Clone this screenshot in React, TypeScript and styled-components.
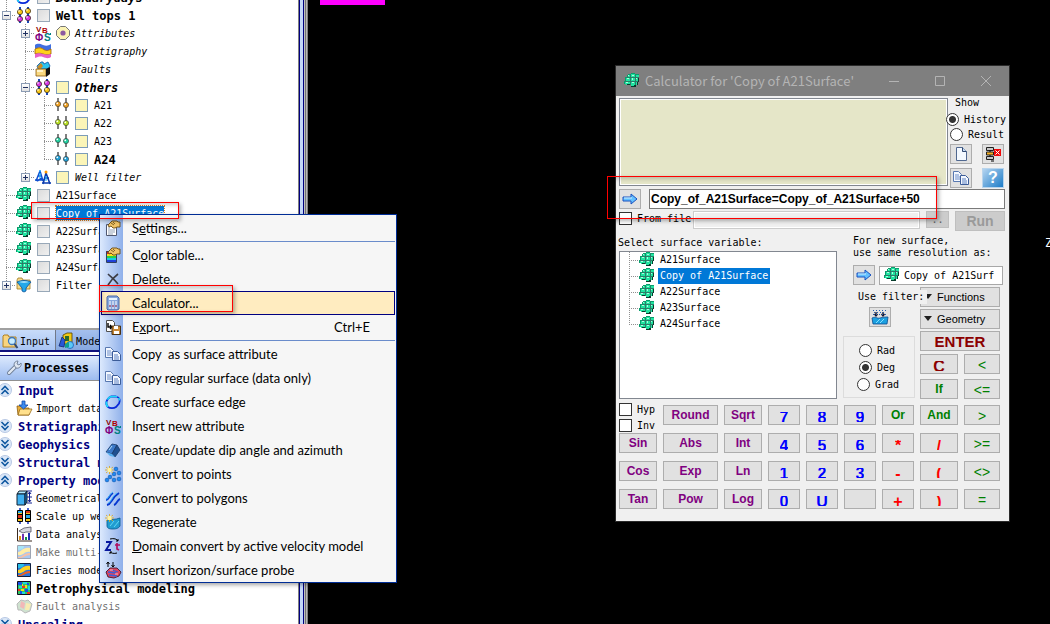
import React from 'react';
import styled, { createGlobalStyle, css } from 'styled-components';

const mono = '"DejaVu Sans Mono", "Liberation Mono", monospace';
const ui = 'Lato, "Noto Sans", sans-serif';
const titleFont = '"Noto Sans CJK SC", "Noto Sans", sans-serif';
const sans = '"Liberation Sans", Arial, sans-serif';

const Global = createGlobalStyle`
  * { box-sizing: border-box; }
  body { margin: 0; background: #000; font-family: ${mono}; font-size: 10px; color: #000; }
  button, input { font: inherit; color: inherit; margin: 0; padding: 0; }
  ul { list-style: none; margin: 0; padding: 0; }
`;

/* ---------- icons ---------- */

const Svg = styled.svg`
  display: block;
  flex: none;
  width: 16px;
  height: 16px;
  overflow: visible;
`;

const Ico = ({ children, faded }: { children: React.ReactNode; faded?: boolean }) => (
  <Svg viewBox="0 0 16 16" aria-hidden="true" opacity={faded ? 0.4 : 1}>{children}</Svg>
);

const SurfaceIcon = () => (
  <Ico>
    <g shapeRendering="crispEdges">
      <path d="M4 1h3V0h4v1h4v8h-1v3h-2v1h-1v1H7v-2H2v-1H0V8h1V4h2V2h1z" fill="#20e4a0" />
      <path d="M4 1h3V0h4v1h4v1h-4V1H7v1H4zM1 4h2V2h1v3H1zM0 8h1V5h1v4H1v2H0z" fill="#0a9c6c" />
      <path d="M6 2h1v10H6zM11 2h1v11h-1zM3 4h12v1H3zM1 8h14v1H1z" fill="#2c7c68" />
      <path d="M3 5h2v1H3zM4 2h1v1H4zM8 2h2v1H8zM8 5h1v2H8zM2 9h2v1H2zM8 9h2v1H8zM12 5h1v1h-1z" fill="#a8ffe0" />
      <path d="M14 5h1v4h-1zM13 9h1v3h-1zM10 12h2v2h-2zM7 13h4v1H7zM3 11h3v1H3z" fill="#083c2c" />
    </g>
  </Ico>
);

const BeadPair = ({ top, bottom }: { top: string; bottom: string }) => (
  <Ico>
    <path d="M4 0v16M12 0v16" stroke="#2060ff" strokeWidth="2" />
    <path d="M4 0v2M12 0v2M4 7v2M12 7v2M4 14v2M12 14v2" stroke="#103070" strokeWidth="1" />
    {[4, 12].map((x) => (
      <g key={x} stroke="#30200c" strokeWidth="0.7">
        <circle cx={x} cy={x === 4 ? 5 : 4} r="2.6" fill={top} />
        <circle cx={x} cy={x === 4 ? 12 : 11} r="2.6" fill={bottom} />
        <circle cx={x - 1} cy={x === 4 ? 4 : 3} r="0.8" fill="#fff" stroke="none" />
        <circle cx={x - 1} cy={x === 4 ? 11 : 10} r="0.8" fill="#fff" stroke="none" />
      </g>
    ))}
  </Ico>
);

const PinIcon = ({ color }: { color: string }) => (
  <Ico>
    <path d="M4 1v13M12 1v13" stroke="#606060" strokeWidth="1.6" />
    <circle cx="4" cy="7" r="2.6" fill={color} stroke="#303030" strokeWidth="0.6" />
    <circle cx="12" cy="8" r="2.6" fill={color} stroke="#303030" strokeWidth="0.6" />
    <circle cx="3.3" cy="6.3" r="0.9" fill="#fff" />
    <circle cx="11.3" cy="7.3" r="0.9" fill="#fff" />
  </Ico>
);

const AttrIcon = () => (
  <Ico>
    <g fontFamily="Liberation Sans" fontWeight="bold">
      <text x="1" y="7" fontSize="8" fill="#8b0000">V</text>
      <text x="7" y="8" fontSize="8" fill="#b00000">B</text>
      <text x="0" y="16" fontSize="10" fill="#800080">Φ</text>
      <text x="9" y="16" fontSize="10" fill="#008080">S</text>
    </g>
    <path d="M15.5 8v2" stroke="#008080" />
  </Ico>
);

const TargetIcon = () => (
  <Svg viewBox="0 0 14 14" aria-hidden="true">
    <path d="M4.500 .5h5l4 4v5l-4 4h-5l-4-4v-5z" fill="#fbf3b4" stroke="#777" />
    <circle cx="7" cy="7" r="2.600" fill="#8d5aa0" />
  </Svg>
);

const StrataIcon = () => (
  <Ico>
    <path d="M0 2c3-2 5-1 8 0s5 1 8-1v5c-3 2-5 2-8 0s-5-1-8 0z" fill="#3f6fe0" />
    <path d="M0 6c3-1 5-2 8 0s5 2 8 0v5c-3 1-5 1-8 0s-5-1-8 0z" fill="#ffd21a" stroke="#a05a00" strokeWidth="0.8" />
    <path d="M0 11c3-1 5-1 8 0s5 1 8 0v3c-3 2-5 1-8 0s-5 0-8 1z" fill="#e860c8" />
  </Ico>
);

const FaultsIcon = () => (
  <Ico>
    <path d="M2 5l4-4h2l1 2 4-2 2 4-2 3H3z" fill="#2cc4f0" stroke="#0a4fa0" strokeWidth="0.8" />
    <path d="M2 6l4-4 2 3-3 4z" fill="#c88a28" />
    <path d="M1 8h10v7H1z" fill="#f8d880" stroke="#8a5a10" strokeWidth="0.8" />
    <path d="M11 8l4-2v7l-4 3z" fill="#111" />
    <path d="M2 9h6v2H2z" fill="#fff4cc" />
  </Ico>
);

const WellFilterIcon = () => (
  <Ico>
    <path d="M5 2L1 12M5 2l3 10M3 7h4M0 11h9M2 12l5-3" stroke="#1050d0" strokeWidth="1.500" fill="none" />
    <path d="M11 4L8 15M11 4l4 11M9 9h5M7 14h9" stroke="#0a3cb0" strokeWidth="1.600" fill="none" />
    <path d="M5 4v5M11 7v5" stroke="#28b8f8" strokeWidth="1.200" />
    <circle cx="11" cy="3" r="1.500" fill="#ff9a00" />
    <circle cx="5" cy="2" r="1" fill="#26a0ff" />
  </Ico>
);

const FilterIcon = () => (
  <Ico>
    <path d="M1 3l1-2h4l1 2h7v9H1z" fill="#f6d98a" stroke="#a07820" strokeWidth="0.8" />
    <path d="M1 5c4-2 10-2 14 0l-5 6v3l-2 1-2-1v-3z" fill="#23a8ea" stroke="#0a4f96" strokeWidth="0.8" />
    <path d="M3 5c3-1 7-1 10 0-3 1-7 1-10 0z" fill="#c8f0ff" />
  </Ico>
);

const LoopIcon = () => (
  <Ico>
    <path d="M6 2.500h5c4 1 4.500 4 3 7l-3 3.500c-2 1.500-6 1.500-8 0C0 10 1 5 6 2.500z" fill="none" stroke="#0828d8" strokeWidth="1.800" />
    <path d="M6 2.500h5c2 .5 3.500 2 3.500 4M3 13C0 10 1 5 6 2.500" fill="none" stroke="#18d8f8" strokeWidth="1.600" strokeDasharray="6 2" />
  </Ico>
);

const ChevronIcon = ({ up }: { up?: boolean }) => (
  <Ico>
    <circle cx="8" cy="8" r="6.500" fill="#dce8f8" stroke="#b8c8e4" />
    <path d={up ? 'M4.500 8L8 4.500 11.500 8M4.500 12L8 8.500l3.500 3.500' : 'M4.500 4L8 7.500 11.500 4M4.500 8L8 11.500 11.500 8'} fill="none" stroke="#1058a0" strokeWidth="1.600" />
  </Ico>
);

const SearchFolderIcon = () => (
  <Ico>
    <path d="M1 3l1-1h4l1 2h7v10H1z" fill="#f8d480" stroke="#b08020" />
    <circle cx="10" cy="8" r="3.500" fill="#c8ecff" stroke="#3f78b8" strokeWidth="1.300" />
    <path d="M12.500 11l3 4" stroke="#304870" strokeWidth="2" />
  </Ico>
);

const ModelIcon = () => (
  <Ico>
    <path d="M5 2l4-2h5v9l-5 2H5z" fill="#f0c818" stroke="#504000" strokeWidth="0.8" />
    <path d="M7 3h4v5H7z" fill="#2c6a28" />
    <path d="M1 13l3-9 3 3-1 7z" fill="#2856d8" stroke="#102870" strokeWidth="0.8" />
    <circle cx="12" cy="12" r="3.500" fill="#5ac8f8" stroke="#1860b8" strokeWidth="0.8" />
    <path d="M7 11l4-2v5l-4 1z" fill="#12a090" />
  </Ico>
);

const WrenchIcon = () => (
  <Ico>
    <path d="M3 13l6-6" stroke="#6c7c94" strokeWidth="4" strokeLinecap="round" />
    <path d="M3 13l6-6" stroke="#dfe7f2" strokeWidth="2.400" strokeLinecap="round" />
    <path d="M8 5c0-3 2-4 4-4l-1 3 2 1 2-2c1 3-2 6-5 5z" fill="#dfe7f2" stroke="#6c7c94" strokeWidth="0.900" />
  </Ico>
);

const ImportIcon = () => (
  <Ico>
    <path d="M1 6h5l1 2h6v7H2z" fill="#e8b040" stroke="#8a5c10" strokeWidth="0.800" />
    <path d="M4 9h12l-3 6H2z" fill="#ffe08c" stroke="#9a6c18" strokeWidth="0.800" />
    <path d="M6 1h3v4h3L7.500 9 3 5h3z" fill="#3c8cf0" stroke="#1048a8" strokeWidth="0.800" />
  </Ico>
);

const GeometricalIcon = () => (
  <Ico>
    <path d="M1 4l2-3h8L9 4z" fill="#b0e8ff" stroke="#102030" />
    <path d="M1 4h8v11H1z" fill="#40b0f0" stroke="#102030" />
    <path d="M9 4l2-3v11l-2 3z" fill="#1878c0" stroke="#102030" />
    <path d="M13.500 2v10M12 4l1.500-2L15 4M12 10l1.500 2 1.500-2M11 1h5M11 13h5M11 7h5" stroke="#102090" fill="none" />
  </Ico>
);

const ScaleUpIcon = () => (
  <Ico>
    <path d="M4 0v16M12 0v16" stroke="#1030c0" strokeWidth="1.500" />
    <path d="M1.500 2.500h5v11h-5zM9.500 2.500h5v11h-5z" fill="#f8c820" stroke="#000" />
    <path d="M2 3h4v2H2zM10 7h4v3h-4z" fill="#28a8e8" />
    <path d="M2 7h4v3H2zM10 3h4v2h-4z" fill="#d83018" />
    <path d="M1 6.500h6M9 6.500h6M1 10.500h6M9 10.500h6" stroke="#000" />
  </Ico>
);

const DataIcon = () => (
  <Ico>
    <path d="M1.500 2v13H16" stroke="#3a2a20" fill="none" />
    <path d="M3 10h2v4H3z" fill="#e09018" /><path d="M6 8h2v6H6z" fill="#7030b0" />
    <path d="M9 11h2v3H9z" fill="#109048" /><path d="M12 7h2v7h-2z" fill="#2030b0" />
    <path d="M3 5l5-3 7-1v5l-5 0-3 1z" fill="#d8d8e0" stroke="#505060" strokeWidth="0.800" />
  </Ico>
);

const FaciesIcon = ({ faded }: { faded?: boolean }) => (
  <Ico faded={faded}>
    <path d="M1.500 1.500h13v13h-13z" fill="#2878e0" stroke="#102040" />
    <path d="M2 8c4 0 4-5 12-4v4c-6-1-6 4-12 3z" fill="#ffd020" />
    <path d="M2 13c5 0 5-4 12-4v2c-5 0-6 3-10 3H2z" fill="#f06020" />
    <path d="M2 2h6c0 3-3 4-6 4z" fill="#28c0e8" />
  </Ico>
);

const PetroIcon = () => (
  <Ico>
    <path d="M1.500 1.500h13v13h-13z" fill="#30c860" stroke="#101020" />
    <path d="M2 2h4v3H2zM9 9h3v3H9zM4 11h2v3H4zM11 3h2v2h-2z" fill="#1850e8" />
    <path d="M7 2h4v2H7zM3 6h3v2H3zM12 6h2v4h-2zM6 12h3v2H6z" fill="#20d8e0" />
    <path d="M6 6h3v2H6zM11 12h3v2h-3zM2 9h2v2H2z" fill="#f03818" />
    <path d="M9 5h2v3H9zM5 9h3v2H5zM6 4h1v2H6z" fill="#f8d820" />
  </Ico>
);

const FaultIcon = () => (
  <Ico faded>
    <path d="M1 6l4-4 4 1 3-1 4 4-2 7-5 2-4-3H2z" fill="#88b888" stroke="#555" />
    <path d="M5 3l4 2-1 6-4-2z" fill="#e05050" /><path d="M10 5l5 1-2 6-4 0z" fill="#f0d040" />
  </Ico>
);

const Hand = () => (
  <g>
    <path d="M5 3l2-2h5l1 1h2v5h-3l-2 1H8L6 6 4 7 3 5z" fill="#f0c468" stroke="#6a4a10" strokeWidth="0.900" />
    <path d="M6 3l3 2M8 2l2 2" stroke="#6a4a10" strokeWidth="0.800" />
  </g>
);

const SettingsIcon = () => (
  <Ico>
    <path d="M1.500 4.500h10v11h-10z" fill="#fff" stroke="#505870" />
    <path d="M3 10h7M3 12h7M3 14h5M3 8h2" stroke="#8898b0" strokeWidth="0.900" />
    <Hand />
  </Ico>
);

const ColorTableIcon = () => (
  <Ico>
    <path d="M1 4h11v3H1z" fill="#e02818" /><path d="M1 7h11v2H1z" fill="#f8e020" />
    <path d="M1 9h11v2H1z" fill="#28d048" /><path d="M1 11h11v2H1z" fill="#18c8e8" />
    <path d="M1 13h11v2H1z" fill="#2040d8" />
    <path d="M1.500 4.500h10v11h-10z" fill="none" stroke="#304060" />
    <Hand />
  </Ico>
);

const DeleteIcon = () => (
  <Ico><path d="M3 3c3 3 7 6 10 10M13 3C9 6 6 9 3 14" stroke="#3c3c44" strokeWidth="1.600" fill="none" /></Ico>
);

const CalcIcon = () => (
  <Ico>
    <path d="M3 1h9l2 2v11l-2 1H3l-1-1V2z" fill="#88a8dc" stroke="#4868a8" />
    <path d="M4 3h8v2H4z" fill="#e8f4ff" />
    {[7, 9, 11, 13].map((y) => (
      <path key={y} d={`M4 ${y}h2M7 ${y}h2M10 ${y}h2`} stroke={y === 11 ? '#c04050' : '#fff'} strokeWidth="1.200" />
    ))}
  </Ico>
);

const ExportIcon = () => (
  <Ico>
    <path d="M1.500 1.500h6l2 2v9h-8z" fill="#fff" stroke="#505050" />
    <path d="M3 4v4h4M5 6l2 2-2 2" stroke="#000" strokeWidth="1.400" fill="none" />
    <path d="M7 7h8.500v8.500H7z" fill="#c88838" stroke="#4a3010" />
    <path d="M9 7h4v3H9zM9 12h5v3H9z" fill="#fff" />
  </Ico>
);

const CopyIcon = () => (
  <Ico>
    <path d="M.5 1.500h5l3 3v7h-8z" fill="#f4f8ff" stroke="#5878b0" />
    <path d="M2 5h4M2 7h5M2 9h5" stroke="#6a8cc8" />
    <path d="M7.500 5.500h5l3 3v6h-8z" fill="#f4f8ff" stroke="#3c5c98" />
    <path d="M9 9h4M9 11h5M9 13h5" stroke="#5c80c0" />
  </Ico>
);

const DipIcon = () => (
  <Ico>
    <path d="M1 10l6-8 5 1-5 9z" fill="#3c78c8" stroke="#183868" strokeWidth="0.800" />
    <path d="M7 12l5-9 3 5-5 7z" fill="#205090" stroke="#183868" strokeWidth="0.800" />
    <path d="M1 10l6 2 3 3-5-1z" fill="#58b0f0" />
    <path d="M4 8l3-4" stroke="#b0e0ff" />
  </Ico>
);

const Spark = () => (
  <g>
    <path d="M1 1l7 6M8 1L1 7M4.500 0v8M0 4h9" stroke="#d8a830" strokeWidth="0.900" />
    <path d="M2.500 2h4v4h-4z" fill="#fff2a0" />
  </g>
);

const PointsIcon = () => (
  <Ico>
    {[[11, 3], [14, 7], [9, 8], [5, 11], [2, 14], [9, 14], [14, 13]].map(([x, y]) => (
      <circle key={`${x}-${y}`} cx={x} cy={y} r="1.900" fill="#2088f0" stroke="#0848a0" strokeWidth="0.500" />
    ))}
    <Spark />
  </Ico>
);

const PolygonsIcon = () => (
  <Ico>
    <path d="M1 10c3 0 3-5 7-7M2 15c5-1 4-7 12-12M9 15c3-1 3-5 6-6" stroke="#0838d0" strokeWidth="1.900" fill="none" />
    <path d="M1 9c3 0 3-5 7-7M3 13c4-1 3-6 9-10" stroke="#38b8f8" strokeWidth="0.900" fill="none" />
  </Ico>
);

const RegenerateIcon = () => (
  <Ico>
    <path d="M2 6c4-1 8 0 13-2v8c-2 3-5 3-8 3s-5-1-5-3z" fill="#209cd0" stroke="#085890" strokeWidth="0.800" />
    <path d="M5 12l4-5M9 13l5-6" stroke="#60d8f8" />
    <Spark />
  </Ico>
);

const DomainIcon = () => (
  <Ico>
    <path d="M1 4h5L1 12h5" fill="none" stroke="#0818a0" strokeWidth="1.900" />
    <path d="M12 5v6l2 1M10 7h5" fill="none" stroke="#b01060" strokeWidth="1.700" />
    <path d="M5 1c4-1 7 0 8 2M12 15c-3 1-6 0-7-1M13 1v2h-2M5 16v-2h2" fill="none" stroke="#000" />
  </Ico>
);

const ProbeIcon = () => (
  <Ico>
    <path d="M1 10l4-4 7 0 4 4-2 4-5 2-6-1z" fill="#e04460" stroke="#401830" strokeWidth="0.900" />
    <path d="M3 10l8 1M4 13l8 1M7 8l6 2" stroke="#3860d8" strokeWidth="1.300" />
    <path d="M5 8l3 0M10 12l3 0" stroke="#ffb0b8" />
    <path d="M3 0v5M1.500 2L3 0l1.500 2M8 5V0M6.500 3L8 5l1.500-2" stroke="#000" fill="none" />
  </Ico>
);

const ArrowIcon = () => (
  <Ico>
    <path d="M1 6h8V3l6 5-6 5v-3H1z" fill="#64c0ff" stroke="#1850c0" />
    <path d="M2 7h8" stroke="#d0f0ff" />
  </Ico>
);

const NewPageIcon = () => (
  <Ico>
    <path d="M3.500 1.500h6l4 4v9h-10z" fill="#f4f9ff" stroke="#506890" />
    <path d="M9.500 1.500v4h4" fill="#c8dcf4" stroke="#304870" />
  </Ico>
);

const ClearIcon = () => (
  <Ico>
    <path d="M1.500 1.500h7v3h-7zM1.500 10.500h7v3h-7z" fill="#c8c8c8" stroke="#202020" />
    <path d="M1.500 6h7v3h-7z" fill="#f8b020" stroke="#202020" />
    <path d="M5 4.500V6M5 9v1.500M6 15h3" stroke="#000" />
    <path d="M9 3h7v7H9z" fill="#f00808" />
    <path d="M10.500 4.500l4 4M14.500 4.500l-4 4" stroke="#fff" />
  </Ico>
);

const FilterWaterIcon = () => (
  <Ico>
    <path d="M0 9c4-2 5 1 8 0s5-1 8-1l-1 7H1z" fill="#1ca0e0" stroke="#0a4a90" strokeWidth="0.800" />
    <path d="M4 14l4-4M8 14l4-4" stroke="#88e0ff" />
    <path d="M4 3v4M11 3v4M2.500 5L4 7l1.500-2M9.500 5L11 7l1.500-2" stroke="#181830" strokeWidth="1.300" fill="none" />
    <path d="M1 1.500h14M2 3.500h12M1 5.500h14" stroke="#2860b0" strokeDasharray="1 2" />
  </Ico>
);

/* ---------- explorer ---------- */

const Screen = styled.div`
  position: relative;
  display: flex;
  height: 100vh;
  overflow: hidden;
  background: #000;
`;

const Sidebar = styled.aside`
  display: flex;
  flex-direction: column;
  flex: none;
  width: 298px;
  background: #fff;
`;

const Splitter = styled.div`
  flex: none;
  width: 10px;
  background: linear-gradient(to right, #808080 1px, #000080 1px 2px, #c4d8f8 2px 5px, #000080 5px 6px, #c0c0c0 6px 7px, #747474 7px 8px, #b8b8b8 8px 9px, #808080 9px);
`;

const TreePane = styled.div`
  flex: none;
  height: 328px;
  overflow: hidden;
`;

const Tree = styled.ul`
  margin-top: -12px;
`;

const TreeRow = styled.li`
  display: flex;
  align-items: center;
  height: 18px;
`;

type Line = 'none' | 'v' | 'tee' | 'ell';
const dotsY = 'repeating-linear-gradient(to bottom, #909090 0 1px, transparent 1px 2px)';
const dotsX = 'repeating-linear-gradient(to right, #909090 0 1px, transparent 1px 2px)';

const Guide = styled.span<{ $line: Line; $last?: boolean }>`
  display: flex;
  align-items: center;
  flex: none;
  width: ${(p) => (p.$last ? 16 : 19)}px;
  height: 100%;
  padding-left: 2px;
  background-repeat: no-repeat;
  ${(p) => p.$line === 'v' && css`background-image: ${dotsY}; background-size: 1px 100%; background-position: 6px 0;`}
  ${(p) => p.$line === 'tee' && css`background-image: ${dotsY}, ${dotsX}; background-size: 1px 100%, 9px 1px; background-position: 6px 0, 6px 50%;`}
  ${(p) => p.$line === 'ell' && css`background-image: ${dotsY}, ${dotsX}; background-size: 1px 50%, 9px 1px; background-position: 6px 0, 6px 50%;`}
`;

const Toggle = styled.button<{ $open?: boolean }>`
  width: 9px;
  height: 9px;
  border: 1px solid #8c9cb4;
  background:
    linear-gradient(#203060, #203060) center / 5px 1px no-repeat,
    ${(p) => (p.$open ? '' : 'linear-gradient(#203060, #203060) center / 1px 5px no-repeat,')}
    linear-gradient(#fff, #e0e0e0);
`;

const Tick = styled.input<{ $yellow?: boolean }>`
  appearance: none;
  flex: none;
  width: 13px;
  height: 13px;
  margin: 0 6px 0 5px;
  border: 1px solid ${(p) => (p.$yellow ? '#7c9cb8' : '#98a8b8')};
  background: ${(p) => (p.$yellow ? '#fbf5b8' : 'linear-gradient(135deg, #dcdcdc, #f0f0f0)')};
`;

const TickSpace = styled.span`
  display: flex;
  flex: none;
  width: 24px;
  padding-left: 5px;
  svg { width: 14px; height: 14px; }
`;

const Name = styled.span<{ $bold?: boolean; $italic?: boolean; $selected?: boolean }>`
  padding-top: 2px;
  white-space: pre;
  line-height: 12px;
  font-size: ${(p) => (p.$bold ? 12 : 10)}px;
  font-weight: ${(p) => (p.$bold ? 700 : 400)};
  font-style: ${(p) => (p.$italic ? 'italic' : 'normal')};
  ${(p) => p.$selected && css`background: #0078d7; color: #fff; outline: 1px dotted #e08020;`}
`;

type Node = {
  label: string;
  guides: Line[];
  toggle?: 'open' | 'closed';
  icon: React.ReactNode;
  check?: 'grey' | 'yellow' | 'target';
  bold?: boolean;
  italic?: boolean;
  selected?: boolean;
};

const surface = (label: string, selected?: boolean): Node => ({
  label, guides: ['tee'], icon: <SurfaceIcon />, check: 'grey', selected,
});
const top = (label: string, color: string, line: Line, bold?: boolean): Node => ({
  label, guides: ['v', 'v', line], icon: <PinIcon color={color} />, check: 'yellow', bold,
});

const nodes: Node[] = [
  { label: 'Boundarydays', guides: ['v'], icon: <LoopIcon />, check: 'grey', bold: true, italic: true },
  { label: 'Well tops 1', guides: ['tee'], toggle: 'open', icon: <BeadPair top="#f8c818" bottom="#d838e8" />, check: 'grey', bold: true },
  { label: 'Attributes', guides: ['v', 'tee'], toggle: 'closed', icon: <AttrIcon />, check: 'target', italic: true },
  { label: 'Stratigraphy', guides: ['v', 'tee'], icon: <StrataIcon />, italic: true },
  { label: 'Faults', guides: ['v', 'tee'], icon: <FaultsIcon />, italic: true },
  { label: 'Others', guides: ['v', 'tee'], toggle: 'open', icon: <BeadPair top="#d838e8" bottom="#f8c818" />, check: 'yellow', bold: true, italic: true },
  top('A21', '#f0a020', 'tee'),
  top('A22', '#b8e020', 'tee'),
  top('A23', '#20d0a0', 'tee'),
  top('A24', '#20a0d8', 'ell', true),
  { label: 'Well filter', guides: ['v', 'ell'], toggle: 'closed', icon: <WellFilterIcon />, check: 'yellow', italic: true },
  surface('A21Surface'),
  surface('Copy of A21Surface', true),
  surface('A22Surface'),
  surface('A23Surface'),
  surface('A24Surface'),
  { label: 'Filter', guides: ['ell'], toggle: 'closed', icon: <FilterIcon />, check: 'grey' },
];

const Tabs = styled.div`
  display: flex;
  flex: none;
  height: 24px;
  border-top: 2px solid #a0a0a0;
  border-bottom: 2px solid #10107c;
  background: #a9c6f4;
`;

const Tab = styled.button<{ $on?: boolean }>`
  display: flex;
  align-items: center;
  gap: 2px;
  padding: 2px 5px 0 2px;
  border: 0;
  border-right: 1px solid #707888;
  background: ${(p) => (p.$on ? 'linear-gradient(#c8dcfa, #a8c4f2)' : 'linear-gradient(#a4c0ee, #86a8e0)')};
`;

const PaneTitle = styled.h2`
  display: flex;
  align-items: center;
  flex: none;
  gap: 2px;
  height: 26px;
  margin: 3px 0 0;
  padding-left: 6px;
  border-top: 1px solid #10107c;
  border-bottom: 1px solid #909090;
  background: linear-gradient(#dce9fd, #9dbcf0);
  font-size: 12px;
  font-weight: 700;
`;

const ProcessRow = styled.li<{ $group?: boolean; $dim?: boolean }>`
  display: flex;
  align-items: center;
  gap: ${(p) => (p.$group ? 5 : 4)}px;
  height: 18px;
  padding-left: ${(p) => (p.$group ? 0 : 16)}px;
  color: ${(p) => (p.$group ? '#000080' : p.$dim ? '#707070' : '#000')};
  ${(p) => p.$group && css`svg { margin-left: -3px; }`}
`;

const processes: { label: string; icon?: React.ReactNode; up?: boolean; bold?: boolean; dim?: boolean }[] = [
  { label: 'Input', up: true },
  { label: 'Import data', icon: <ImportIcon /> },
  { label: 'Stratigraphic' },
  { label: 'Geophysics' },
  { label: 'Structural modeling' },
  { label: 'Property modeling', up: true },
  { label: 'Geometrical', icon: <GeometricalIcon /> },
  { label: 'Scale up well logs', icon: <ScaleUpIcon /> },
  { label: 'Data analysis', icon: <DataIcon /> },
  { label: 'Make multi-point', icon: <FaciesIcon faded />, dim: true },
  { label: 'Facies modeling', icon: <FaciesIcon /> },
  { label: 'Petrophysical modeling', icon: <PetroIcon />, bold: true },
  { label: 'Fault analysis', icon: <FaultIcon />, dim: true },
  { label: 'Upscaling' },
];

/* ---------- viewport ---------- */

const Viewport = styled.main`
  display: flex;
  flex: 1;
  align-items: flex-start;
  justify-content: space-between;
  padding-left: 12px;
  overflow: hidden;
  background: #000;
`;

const MagentaBar = styled.div`
  width: 65px;
  height: 5px;
  background: #ff00ff;
`;

const AxisLabel = styled.span`
  width: 5px;
  margin-top: 235px;
  overflow: hidden;
  color: #fff;
  font-size: 12px;
  line-height: 16px;
`;

/* ---------- context menu ---------- */

const Menu = styled.ul`
  position: absolute;
  left: 99px;
  top: 214px;
  width: 298px;
  padding-top: 1px;
  border: 1px solid #002d96;
  background: linear-gradient(to right, #dce9fd, #8fb0ea) left / 23px 100% no-repeat, #f6f6f6;
  font-family: ${ui};
  font-size: 13px;
  box-shadow: 2px 2px 4px rgba(0, 0, 0, 0.35);
`;

const MenuButton = styled.button<{ $hot?: boolean }>`
  display: flex;
  align-items: center;
  width: calc(100% - 2px);
  height: 24px;
  margin-left: 1px;
  padding: 0 24px 0 3px;
  border: 1px solid ${(p) => (p.$hot ? '#000080' : 'transparent')};
  background: ${(p) => (p.$hot ? '#ffecc0' : 'transparent')};
  line-height: 18px;
  white-space: pre;
  text-align: left;
`;

const MenuText = styled.span`
  flex: 1;
  margin-left: 11px;
`;

const MenuRule = styled.li`
  height: 1px;
  margin: 1px 1px 1px 30px;
  background: #6a8ccb;
`;

type Item = { before?: string; key?: string; text: string; icon: React.ReactNode; hot?: boolean; short?: string; rule?: boolean };
const items: Item[] = [
  { before: 'S', key: 'e', text: 'ttings...', icon: <SettingsIcon />, rule: true },
  { before: 'C', key: 'o', text: 'lor table...', icon: <ColorTableIcon /> },
  { text: 'Delete...', icon: <DeleteIcon /> },
  { text: 'Calculator...', icon: <CalcIcon />, hot: true },
  { before: 'E', key: 'x', text: 'port...', icon: <ExportIcon />, short: 'Ctrl+E', rule: true },
  { text: 'Copy  as surface attribute', icon: <CopyIcon /> },
  { text: 'Copy regular surface (data only)', icon: <CopyIcon /> },
  { text: 'Create surface edge', icon: <LoopIcon /> },
  { text: 'Insert new attribute', icon: <AttrIcon /> },
  { text: 'Create/update dip angle and azimuth', icon: <DipIcon /> },
  { text: 'Convert to points', icon: <PointsIcon /> },
  { text: 'Convert to polygons', icon: <PolygonsIcon /> },
  { text: 'Regenerate', icon: <RegenerateIcon /> },
  { key: 'D', text: 'omain convert by active velocity model', icon: <DomainIcon /> },
  { text: 'Insert horizon/surface probe', icon: <ProbeIcon /> },
];

/* ---------- calculator ---------- */

const Dialog = styled.section`
  position: absolute;
  left: 615px;
  top: 65px;
  width: 395px;
  border: 1px solid #2a2a2a;
  background: #f0f0f0;
`;

const TitleBar = styled.header`
  display: flex;
  align-items: center;
  height: 30px;
  padding-left: 8px;
  background: #7f7f7f;
  color: #b4b4b4;
`;

const Title = styled.h1`
  flex: 1;
  margin: 0 0 0 5px;
  font-family: ${titleFont};
  font-size: 13px;
  font-weight: 400;
  line-height: 16px;
  white-space: nowrap;
`;

const WindowButton = styled.button`
  display: flex;
  align-items: center;
  justify-content: center;
  width: 46px;
  height: 28px;
  border: 0;
  background: none;
  svg { width: 12px; height: 12px; }
`;

const Body = styled.div`
  padding: 2px 4px 12px 3px;
`;

const TopArea = styled.div`
  display: flex;
  align-items: flex-start;
`;

const History = styled.div`
  flex: 1;
  height: 88px;
  border: 1px solid #828790;
  box-shadow: inset 0 0 0 1px #fff;
  background: #e5e6c8;
`;

const Side = styled.div`
  display: flex;
  flex-direction: column;
  flex: none;
  width: 57px;
`;

const SideTitle = styled.span`
  padding-left: 7px;
  margin-bottom: 4px;
  line-height: 10px;
`;

const Choice = styled.label<{ $shift?: number }>`
  display: flex;
  align-items: center;
  gap: 5px;
  height: 15px;
  margin-left: ${(p) => p.$shift || 0}px;
  white-space: nowrap;
`;

const Radio = styled.input`
  appearance: none;
  flex: none;
  width: 13px;
  height: 13px;
  border: 1px solid #333;
  border-radius: 50%;
  background: #fff;
  &:checked { background: radial-gradient(circle, #333 3px, #fff 4px); }
`;

const Box = styled.input`
  appearance: none;
  flex: none;
  width: 13px;
  height: 13px;
  border: 1px solid #333;
  background: #fff;
`;

const ToolGrid = styled.div`
  display: grid;
  grid-template-columns: 22px 22px;
  justify-content: space-between;
  row-gap: 4px;
  padding: 2px 1px 1px 2px;
`;

const Tool = styled.button`
  display: flex;
  align-items: center;
  justify-content: center;
  flex: none;
  width: 22px;
  height: 20px;
  border: 1px solid #adadad;
  background: #e1e1e1;
`;

const Help = styled(Tool)`
  border: 1px solid #b8d4ec;
  background: linear-gradient(135deg, #b4d4f0, #1c7cc8);
  color: #fff;
  font-family: ${sans};
  font-size: 16px;
  font-weight: 700;
`;

const Line = styled.div`
  display: flex;
  align-items: center;
  gap: 8px;
`;

const FileLine = styled(Line)`
  align-items: flex-start;
  gap: 6px;
  margin-top: 2px;
`;

const Expression = styled.input`
  flex: 1;
  min-width: 0;
  height: 20px;
  padding: 0 1px;
  border: 1px solid #7a7a7a;
  background: #fff;
  font-family: ${sans};
  font-size: 12px;
  font-weight: 700;
`;

const FileField = styled.input`
  flex: 1;
  min-width: 0;
  height: 18px;
  border: 1px solid #ccc;
  background: #f0f0f0;
  box-shadow: inset 0 0 0 1px #fff;
`;

const Browse = styled.button`
  width: 23px;
  height: 17px;
  border: 1px solid #bfbfbf;
  background: #ccc;
  color: #606060;
`;

const Run = styled.button`
  width: 50px;
  height: 20px;
  border: 1px solid #bfbfbf;
  background: #ccc;
  color: #9a9a9a;
  font-family: ${sans};
  font-size: 14px;
  font-weight: 700;
  line-height: 18px;
`;

const Middle = styled.div`
  display: flex;
  gap: 6px;
  margin-bottom: 3px;
`;

const Variables = styled.div`
  flex: none;
  width: 218px;
`;

const VariablesTitle = styled.div`
  margin: 5px 0 1px -1px;
  line-height: 14px;
`;

const VariableList = styled.ul`
  height: 148px;
  padding-left: 3px;
  border: 1px solid #828790;
  background: #fff;
`;

const VariableRow = styled(TreeRow)`
  height: 16px;
`;

const VariableName = styled(Name)`
  margin-left: 3px;
  padding: 0 2px;
  line-height: 16px;
  outline: 0;
`;

const Right = styled.div`
  flex: 1;
  min-width: 0;
  padding-right: 2px;
`;

const Hint = styled.p`
  margin: 4px 0 6px 10px;
  line-height: 12px;
  white-space: nowrap;
`;

const ResolutionField = styled.div`
  display: flex;
  align-items: center;
  flex: 1;
  gap: 4px;
  height: 19px;
  padding-left: 4px;
  overflow: hidden;
  border: 1px solid #a8a8a8;
  background: #fff;
`;

const ResolutionInput = styled.input`
  flex: 1;
  min-width: 0;
  border: 0;
  background: none;
`;

const ResolutionLine = styled(Line)`
  gap: 4px;
  padding-left: 10px;
`;

const Split = styled.div`
  display: flex;
  gap: 5px;
  margin-top: 2px;
`;

const Options = styled.div`
  flex: none;
  width: 72px;
`;

const FilterLabel = styled.div`
  position: relative;
  z-index: 1;
  width: 69px;
  margin: 3px 0 3px 15px;
  line-height: 14px;
  white-space: nowrap;
  background: #f0f0f0;
`;

const FilterTool = styled(Tool)`
  margin-left: 26px;
`;

const Angles = styled.fieldset`
  display: flex;
  flex-direction: column;
  gap: 2px;
  height: 62px;
  margin: 9px 0 0;
  padding: 6px 0 0 13px;
  border: 1px solid #dcdcdc;
`;

const Keys = styled.div`
  display: grid;
  flex: 1;
  grid-template-columns: 38px 36px;
  column-gap: 6px;
  row-gap: 2px;
  align-content: start;
`;

const Keypad = styled.div`
  display: grid;
  grid-template-columns: 38px 55px 38px 32px 32px 32px 32px 38px 36px;
  column-gap: 6px;
  row-gap: 8px;
`;

type Tone = 'fn' | 'num' | 'op' | 'logic' | 'compare' | 'enter' | 'clear' | 'menu';
const tones: Record<Tone, string> = {
  fn: '#800080', num: '#0000ff', op: '#ff0000', logic: '#008000', compare: '#008000', enter: '#8b0000', clear: '#8b0000', menu: '#000',
};
const isBig = (t: Tone) => t === 'num' || t === 'op' || t === 'clear';

const KeyButton = styled.button<{ $tone: Tone }>`
  display: flex;
  justify-content: ${(p) => (p.$tone === 'menu' ? 'flex-start' : 'center')};
  align-items: flex-start;
  height: 20px;
  padding-left: ${(p) => (p.$tone === 'menu' ? 3 : 0)}px;
  border: 1px solid #adadad;
  background: #e1e1e1;
  color: ${(p) => tones[p.$tone]};
  font-family: ${sans};
  font-size: 12px;
  font-weight: ${(p) => (p.$tone === 'menu' || p.$tone === 'compare' ? 400 : 700)};
  line-height: 18px;
  ${(p) => (p.$tone === 'menu' || p.$tone === 'enter') && css`grid-column: span 2;`}
  ${(p) => p.$tone === 'enter' && css`font-size: 15px; line-height: 20px; margin-bottom: 1px;`}
  ${(p) => p.$tone === 'compare' && css`font-size: 14px; line-height: 20px;`}
  ${(p) => p.$tone === 'menu' && css`font-size: 11px; gap: 5px; &::before { content: ''; margin-top: 6px; border: 4px solid transparent; border-top: 5px solid #202020; border-bottom: 0; }`}
`;

const KeyFace = styled.span<{ $big?: boolean }>`
  ${(p) => p.$big && css`height: 10px; margin-top: 6px; overflow: hidden; font-size: 16px; line-height: 12px;`}
`;

const Key = ({ label, tone }: { label: string; tone: Tone }) => (
  <KeyButton $tone={tone} type="button" aria-label={label || 'blank'}>
    <KeyFace $big={isBig(tone)}>{label}</KeyFace>
  </KeyButton>
);

const LogicRow = styled.div`
  display: grid;
  grid-column: span 2;
  grid-template-columns: subgrid;
  margin-bottom: 3px;
`;

const Toggles = styled.div`
  display: flex;
  flex-direction: column;
  gap: 3px;
  height: 20px;
  margin-top: -2px;
`;

const ToggleLabel = styled.label`
  display: flex;
  align-items: center;
  gap: 5px;
  height: 13px;
`;

const FileToggle = styled(ToggleLabel)`
  margin: 1px -4px 0 0;
`;

const variables = ['A21Surface', 'Copy of A21Surface', 'A22Surface', 'A23Surface', 'A24Surface'];

const padRows: [string, Tone][][] = [
  [['Round', 'fn'], ['Sqrt', 'fn'], ['7', 'num'], ['8', 'num'], ['9', 'num'], ['Or', 'logic'], ['And', 'logic'], ['>', 'compare']],
  [['Sin', 'fn'], ['Abs', 'fn'], ['Int', 'fn'], ['4', 'num'], ['5', 'num'], ['6', 'num'], ['*', 'op'], ['/', 'op'], ['>=', 'compare']],
  [['Cos', 'fn'], ['Exp', 'fn'], ['Ln', 'fn'], ['1', 'num'], ['2', 'num'], ['3', 'num'], ['-', 'op'], ['(', 'op'], ['<>', 'compare']],
  [['Tan', 'fn'], ['Pow', 'fn'], ['Log', 'fn'], ['0', 'num'], ['U', 'num'], ['', 'num'], ['+', 'op'], [')', 'op'], ['=', 'compare']],
];

const Calculator = () => (
  <Dialog aria-label="Calculator">
    <TitleBar>
      <SurfaceIcon />
      <Title>Calculator for 'Copy of A21Surface'</Title>
      <WindowButton aria-label="Minimize"><Svg viewBox="0 0 12 12"><path d="M1 6.500h10" stroke="#b4b4b4" /></Svg></WindowButton>
      <WindowButton aria-label="Maximize"><Svg viewBox="0 0 12 12"><path d="M1.500 1.500h9v9h-9z" stroke="#b4b4b4" fill="none" /></Svg></WindowButton>
      <WindowButton aria-label="Close"><Svg viewBox="0 0 12 12"><path d="M1 1l10 10M11 1L1 11" stroke="#b4b4b4" /></Svg></WindowButton>
    </TitleBar>
    <Body>
      <TopArea>
        <History />
        <Side>
          <SideTitle>Show</SideTitle>
          <Choice $shift={-2}><Radio type="radio" name="show" defaultChecked />History</Choice>
          <Choice $shift={2}><Radio type="radio" name="show" />Result</Choice>
          <ToolGrid>
            <Tool aria-label="New"><NewPageIcon /></Tool>
            <Tool aria-label="Clear"><ClearIcon /></Tool>
            <Tool aria-label="Copy"><CopyIcon /></Tool>
            <Help aria-label="Help">?</Help>
          </ToolGrid>
        </Side>
      </TopArea>
      <Line>
        <Tool aria-label="Insert"><ArrowIcon /></Tool>
        <Expression aria-label="Expression" defaultValue="Copy_of_A21Surface=Copy_of_A21Surface+50" />
      </Line>
      <FileLine>
        <FileToggle><Box type="checkbox" />From file</FileToggle>
        <FileField aria-label="File" disabled />
        <Browse disabled>..</Browse>
        <Run disabled>Run</Run>
      </FileLine>
      <Middle>
        <Variables>
          <VariablesTitle>Select surface variable:</VariablesTitle>
          <VariableList>
            {variables.map((v, i) => (
              <VariableRow key={v}>
                <Guide $line={i === variables.length - 1 ? 'ell' : 'tee'} $last />
                <SurfaceIcon />
                <VariableName $selected={i === 1}>{v}</VariableName>
              </VariableRow>
            ))}
          </VariableList>
        </Variables>
        <Right>
          <Hint>For new surface,<br />use same resolution as:</Hint>
          <ResolutionLine>
            <Tool aria-label="Pick resolution"><ArrowIcon /></Tool>
            <ResolutionField><SurfaceIcon /><ResolutionInput aria-label="Resolution" defaultValue="Copy of A21Surf" /></ResolutionField>
          </ResolutionLine>
          <Split>
            <Options>
              <FilterLabel>Use filter:</FilterLabel>
              <FilterTool aria-label="Use filter"><FilterWaterIcon /></FilterTool>
              <Angles>
                <Choice $shift={2}><Radio type="radio" name="angle" />Rad</Choice>
                <Choice $shift={2}><Radio type="radio" name="angle" defaultChecked />Deg</Choice>
                <Choice><Radio type="radio" name="angle" />Grad</Choice>
              </Angles>
            </Options>
            <Keys>
              <Key label="Functions" tone="menu" />
              <Key label="Geometry" tone="menu" />
              <Key label="ENTER" tone="enter" />
              <LogicRow><Key label="C" tone="clear" /><Key label="<" tone="compare" /></LogicRow>
              <LogicRow><Key label="If" tone="logic" /><Key label="<=" tone="compare" /></LogicRow>
            </Keys>
          </Split>
        </Right>
      </Middle>
      <Keypad>
        <Toggles>
          <ToggleLabel><Box type="checkbox" />Hyp</ToggleLabel>
          <ToggleLabel><Box type="checkbox" />Inv</ToggleLabel>
        </Toggles>
        {padRows.flat().map(([label, tone]) => <Key key={label} label={label} tone={tone} />)}
      </Keypad>
    </Body>
  </Dialog>
);

/* ---------- red markers ---------- */

const Marker = styled.div<{ $x: number; $y: number; $w: number; $h: number }>`
  position: absolute;
  left: ${(p) => p.$x}px;
  top: ${(p) => p.$y}px;
  width: ${(p) => p.$w}px;
  height: ${(p) => p.$h}px;
  border: 1px solid #ff0000;
  box-shadow: 2px 2px 4px rgba(0, 0, 0, 0.3), inset 2px 2px 4px rgba(0, 0, 0, 0.2);
  pointer-events: none;
`;

export default function App() {
  return (
    <>
      <Global />
      <Screen>
        <Sidebar>
          <TreePane>
            <Tree>
              {nodes.map((n) => (
                <TreeRow key={n.label}>
                  {n.guides.map((g, i) => {
                    const last = i === n.guides.length - 1;
                    return (
                      <Guide key={i} $line={g} $last={last}>
                        {last && n.toggle && <Toggle $open={n.toggle === 'open'} aria-label={`Toggle ${n.label}`} />}
                      </Guide>
                    );
                  })}
                  {n.icon}
                  {n.check === 'grey' || n.check === 'yellow'
                    ? <Tick type="checkbox" $yellow={n.check === 'yellow'} aria-label={n.label} />
                    : <TickSpace>{n.check === 'target' && <TargetIcon />}</TickSpace>}
                  <Name $bold={n.bold} $italic={n.italic} $selected={n.selected}>{n.label}</Name>
                </TreeRow>
              ))}
            </Tree>
          </TreePane>
          <Tabs role="tablist">
            <Tab role="tab" $on><SearchFolderIcon />Input</Tab>
            <Tab role="tab"><ModelIcon />Models</Tab>
          </Tabs>
          <PaneTitle><WrenchIcon />Processes</PaneTitle>
          <ul>
            {processes.map((p) => (
              <ProcessRow key={p.label} $group={!p.icon} $dim={p.dim}>
                {p.icon || <ChevronIcon up={p.up} />}
                <Name $bold={p.bold || !p.icon}>{p.label}</Name>
              </ProcessRow>
            ))}
          </ul>
        </Sidebar>
        <Splitter />
        <Viewport>
          <MagentaBar />
          <AxisLabel>Z</AxisLabel>
        </Viewport>

        <Menu>
          {items.map((m) => (
            <React.Fragment key={m.text}>
              <li>
                <MenuButton $hot={m.hot} type="button">
                  {m.icon}
                  <MenuText>{m.before}{m.key && <u>{m.key}</u>}{m.text}</MenuText>
                  {m.short}
                </MenuButton>
              </li>
              {m.rule && <MenuRule role="separator" />}
            </React.Fragment>
          ))}
        </Menu>

        <Calculator />

        <Marker $x={31} $y={202} $w={148} $h={17} />
        <Marker $x={99} $y={285} $w={134} $h={27} />
        <Marker $x={607} $y={176} $w={330} $h={43} />
      </Screen>
    </>
  );
}
